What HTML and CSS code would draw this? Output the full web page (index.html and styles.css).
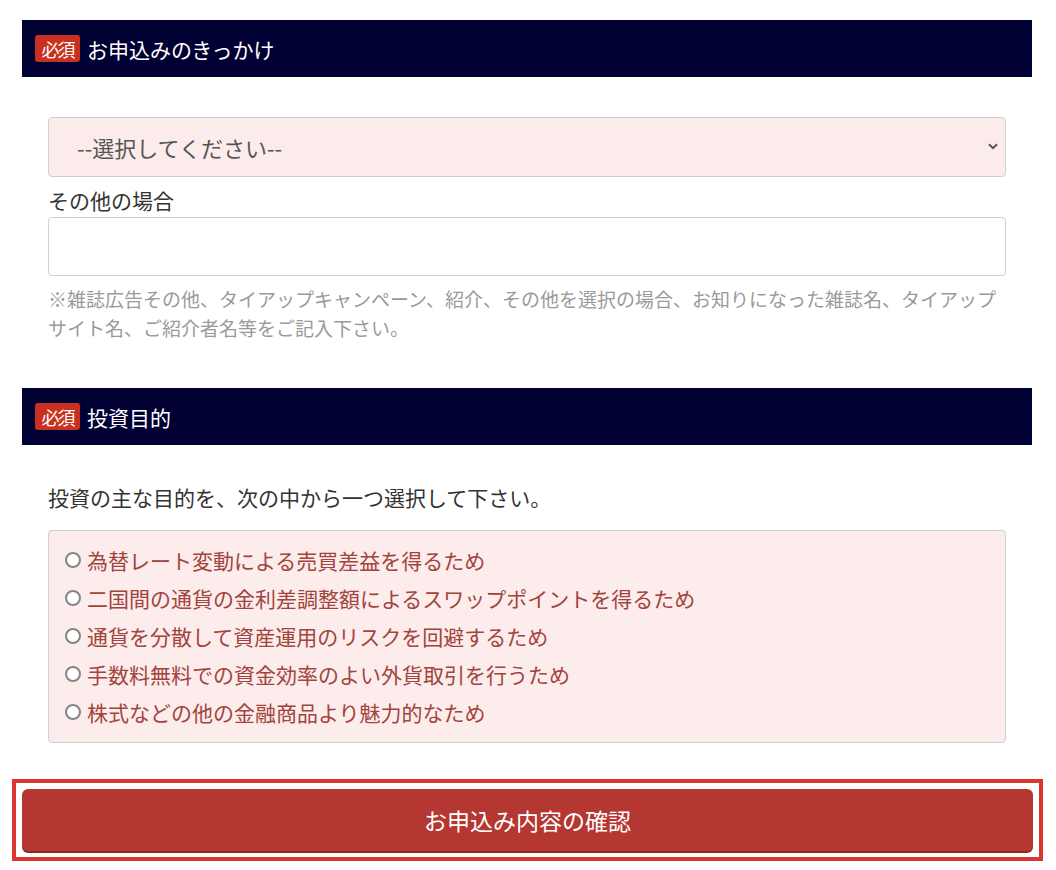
FILE: index.html
```html
<!DOCTYPE html>
<html lang="ja">
<head>
  <meta charset="utf-8">
  <title>お申込みフォーム</title>
  <link rel="stylesheet" href="styles.css">
</head>
<body>
  <form class="entry-form">
    <div class="section">
      <h2 class="section-head"><span class="required">必須</span>お申込みのきっかけ</h2>
      <div class="section-body">
        <div class="select-wrap">
          <select class="field field-select">
            <option>--選択してください--</option>
          </select>
          <svg class="select-arrow" width="10" height="7" viewBox="0 0 10 7"><path d="M1 1.2 L5 5.2 L9 1.2" fill="none" stroke="#555" stroke-width="2"/></svg>
        </div>
        <label class="field-label">その他の場合</label>
        <input class="field field-text" type="text">
        <p class="note">※雑誌広告その他、タイアップキャンペーン、紹介、その他を選択の場合、お知りになった雑誌名、タイアップサイト名、ご紹介者名等をご記入下さい。</p>
      </div>
    </div>

    <div class="section section-purpose">
      <h2 class="section-head"><span class="required">必須</span>投資目的</h2>
      <div class="section-body">
        <p class="intro">投資の主な目的を、次の中から一つ選択して下さい。</p>
        <div class="radio-box">
          <label class="radio-item"><input type="radio" name="purpose">為替レート変動による売買差益を得るため</label>
          <label class="radio-item"><input type="radio" name="purpose">二国間の通貨の金利差調整額によるスワップポイントを得るため</label>
          <label class="radio-item"><input type="radio" name="purpose">通貨を分散して資産運用のリスクを回避するため</label>
          <label class="radio-item"><input type="radio" name="purpose">手数料無料での資金効率のよい外貨取引を行うため</label>
          <label class="radio-item"><input type="radio" name="purpose">株式などの他の金融商品より魅力的なため</label>
        </div>
      </div>
    </div>

    <div class="submit-wrap">
      <button type="button" class="submit">お申込み内容の確認</button>
    </div>
  </form>
</body>
</html>
```

FILE: styles.css
```css
body {
  margin: 0;
  background: #fff;
  font-family: "Noto Sans CJK JP", "Noto Sans", sans-serif;
  color: #333;
}

.entry-form {
  padding-top: 20px;
}

.section {
  margin: 0 24px 0 22px;
}

.section-purpose {
  margin-top: 46px;
}

.section-head {
  display: flex;
  align-items: center;
  gap: 7px;
  height: 57px;
  margin: 0;
  padding-left: 13px;
  background-color: #000033;
  color: #fff;
  font-size: 21px;
  font-weight: normal;
}

.required {
  display: inline-flex;
  align-items: center;
  justify-content: center;
  width: 45px;
  height: 27px;
  background-color: #c9301f;
  border-radius: 3px;
  font-size: 18px;
  letter-spacing: -2px;
  color: #fff;
}

.section-body {
  padding: 40px 26px 0;
}

.select-wrap {
  position: relative;
}

.field {
  display: block;
  box-sizing: border-box;
  width: 100%;
  height: 60px;
  border: 1px solid #cfcfcf;
  border-radius: 4px;
  font-family: inherit;
  font-size: 21px;
}

.field-select {
  appearance: none;
  -webkit-appearance: none;
  padding-left: 28px;
  background-color: #fbeceb;
  font-size: 22px;
  color: #555;
}

.select-arrow {
  position: absolute;
  top: 26px;
  right: 8px;
}

.field-label {
  display: block;
  margin-top: 8px;
  margin-bottom: 2px;
  font-size: 21px;
  line-height: 30px;
  color: #333;
}

.field-text {
  height: 59px;
  background: #fff;
}

.note {
  margin: 8px 0 0;
  font-size: 19px;
  line-height: 29px;
  color: #9a9a9a;
}

.section-purpose .section-body {
  padding-top: 37px;
}

.intro {
  margin: 0 0 18px;
  font-size: 21px;
  line-height: 30px;
  color: #333;
}

.radio-box {
  padding: 10px 16px 11px;
  background-color: #fcecec;
  border: 1px solid #cfcfcf;
  border-radius: 4px;
}

.radio-item {
  display: flex;
  align-items: center;
  gap: 6px;
  height: 38px;
  font-size: 21px;
  color: #a2443c;
}

.radio-item input {
  appearance: none;
  -webkit-appearance: none;
  box-sizing: border-box;
  width: 16px;
  height: 16px;
  margin: 0;
  border: 2px solid #858585;
  border-radius: 50%;
  background: #fff;
}

.submit-wrap {
  margin: 36px 13px 0 12px;
  padding: 6px;
  border: 4px solid #db3530;
}

.submit {
  display: block;
  width: 100%;
  height: 62px;
  border: none;
  border-radius: 6px;
  background-color: #b53731;
  box-shadow: 0 2px 0 #8f2b26;
  color: #fff;
  font-family: inherit;
  font-size: 23px;
  cursor: pointer;
}
```
